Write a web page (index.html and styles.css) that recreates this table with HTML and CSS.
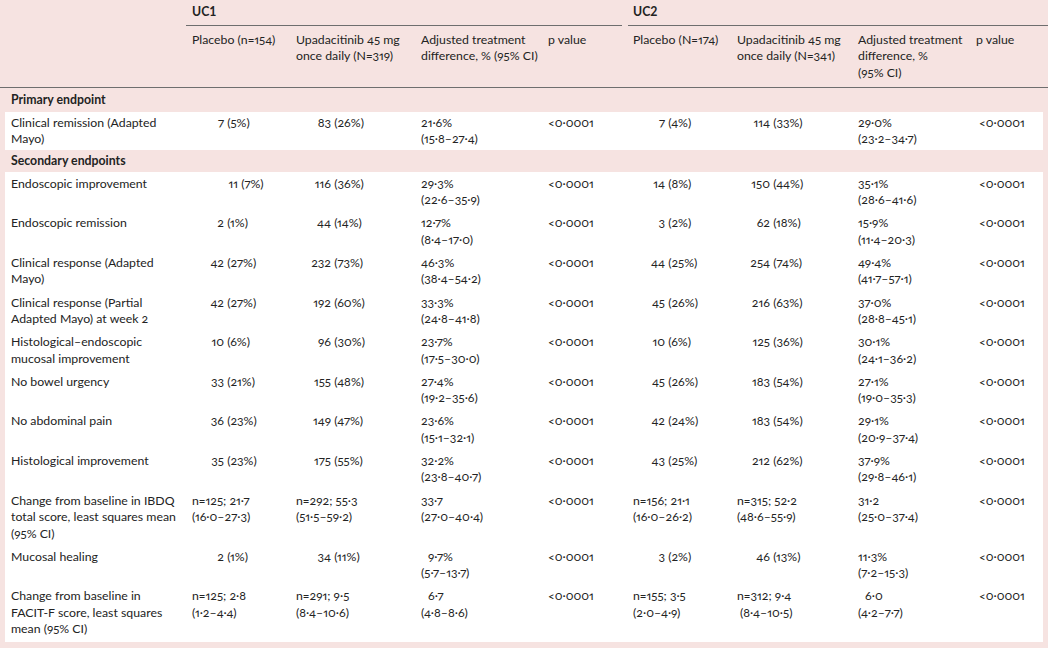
FILE: index.html
```html
<!DOCTYPE html>
<html lang="en">
<head>
<meta charset="utf-8">
<title>Endpoints table</title>
<link rel="stylesheet" href="styles.css">
</head>
<body>
<div class="page">
  <div class="head">
    <div class="grid full">
      <div class="cell"></div>
      <div class="cell grp uc1">UC1</div>
      <div class="cell grp uc2">UC2</div>
    </div>
    <div class="grid full sub">
      <div class="cell"></div>
      <div class="cell">Placebo (n=154)</div>
      <div class="cell">Upadacitinib 45 mg<br>once daily (N=319)</div>
      <div class="cell">Adjusted treatment<br>difference, % (95% CI)</div>
      <div class="cell">p value</div>
      <div class="cell">Placebo (N=174)</div>
      <div class="cell">Upadacitinib 45 mg<br>once daily (N=341)</div>
      <div class="cell">Adjusted treatment<br>difference, %<br>(95% CI)</div>
      <div class="cell ph">p value</div>
    </div>
  </div>

  <div class="section">Primary endpoint</div>
  <div class="panel single">
    <div class="grid inset row">
      <div class="cell lab">Clinical remission (Adapted Mayo)</div>
      <div class="cell a"><span class="n">7</span> (5%)</div>
      <div class="cell b"><span class="n">83</span> (26%)</div>
      <div class="cell">21·6%<br>(15·8–27·4)</div>
      <div class="cell">&lt;0·0001</div>
      <div class="cell c"><span class="n">7</span> (4%)</div>
      <div class="cell d"><span class="n">114</span> (33%)</div>
      <div class="cell">29·0%<br>(23·2–34·7)</div>
      <div class="cell pv">&lt;0·0001</div>
    </div>
  </div>

  <div class="section sec2">Secondary endpoints</div>
  <div class="panel main">
    <div class="grid inset row">
      <div class="cell lab">Endoscopic improvement</div>
      <div class="cell a wide"><span class="n">11</span> (7%)</div>
      <div class="cell b"><span class="n">116</span> (36%)</div>
      <div class="cell">29·3%<br>(22·6–35·9)</div>
      <div class="cell">&lt;0·0001</div>
      <div class="cell c"><span class="n">14</span> (8%)</div>
      <div class="cell d"><span class="n">150</span> (44%)</div>
      <div class="cell">35·1%<br>(28·6–41·6)</div>
      <div class="cell pv">&lt;0·0001</div>
    </div>
    <div class="grid inset row">
      <div class="cell lab">Endoscopic remission</div>
      <div class="cell a"><span class="n">2</span> (1%)</div>
      <div class="cell b"><span class="n">44</span> (14%)</div>
      <div class="cell">12·7%<br>(8·4–17·0)</div>
      <div class="cell">&lt;0·0001</div>
      <div class="cell c"><span class="n">3</span> (2%)</div>
      <div class="cell d"><span class="n">62</span> (18%)</div>
      <div class="cell">15·9%<br>(11·4–20·3)</div>
      <div class="cell pv">&lt;0·0001</div>
    </div>
    <div class="grid inset row">
      <div class="cell lab">Clinical response (Adapted Mayo)</div>
      <div class="cell a"><span class="n">42</span> (27%)</div>
      <div class="cell b"><span class="n">232</span> (73%)</div>
      <div class="cell">46·3%<br>(38·4–54·2)</div>
      <div class="cell">&lt;0·0001</div>
      <div class="cell c"><span class="n">44</span> (25%)</div>
      <div class="cell d"><span class="n">254</span> (74%)</div>
      <div class="cell">49·4%<br>(41·7–57·1)</div>
      <div class="cell pv">&lt;0·0001</div>
    </div>
    <div class="grid inset row">
      <div class="cell lab">Clinical response (Partial Adapted Mayo) at week 2</div>
      <div class="cell a"><span class="n">42</span> (27%)</div>
      <div class="cell b"><span class="n">192</span> (60%)</div>
      <div class="cell">33·3%<br>(24·8–41·8)</div>
      <div class="cell">&lt;0·0001</div>
      <div class="cell c"><span class="n">45</span> (26%)</div>
      <div class="cell d"><span class="n">216</span> (63%)</div>
      <div class="cell">37·0%<br>(28·8–45·1)</div>
      <div class="cell pv">&lt;0·0001</div>
    </div>
    <div class="grid inset row">
      <div class="cell lab">Histological–endoscopic mucosal improvement</div>
      <div class="cell a"><span class="n">10</span> (6%)</div>
      <div class="cell b"><span class="n">96</span> (30%)</div>
      <div class="cell">23·7%<br>(17·5–30·0)</div>
      <div class="cell">&lt;0·0001</div>
      <div class="cell c"><span class="n">10</span> (6%)</div>
      <div class="cell d"><span class="n">125</span> (36%)</div>
      <div class="cell">30·1%<br>(24·1–36·2)</div>
      <div class="cell pv">&lt;0·0001</div>
    </div>
    <div class="grid inset row">
      <div class="cell lab">No bowel urgency</div>
      <div class="cell a"><span class="n">33</span> (21%)</div>
      <div class="cell b"><span class="n">155</span> (48%)</div>
      <div class="cell">27·4%<br>(19·2–35·6)</div>
      <div class="cell">&lt;0·0001</div>
      <div class="cell c"><span class="n">45</span> (26%)</div>
      <div class="cell d"><span class="n">183</span> (54%)</div>
      <div class="cell">27·1%<br>(19·0–35·3)</div>
      <div class="cell pv">&lt;0·0001</div>
    </div>
    <div class="grid inset row">
      <div class="cell lab">No abdominal pain</div>
      <div class="cell a"><span class="n">36</span> (23%)</div>
      <div class="cell b"><span class="n">149</span> (47%)</div>
      <div class="cell">23·6%<br>(15·1–32·1)</div>
      <div class="cell">&lt;0·0001</div>
      <div class="cell c"><span class="n">42</span> (24%)</div>
      <div class="cell d"><span class="n">183</span> (54%)</div>
      <div class="cell">29·1%<br>(20·9–37·4)</div>
      <div class="cell pv">&lt;0·0001</div>
    </div>
    <div class="grid inset row">
      <div class="cell lab">Histological improvement</div>
      <div class="cell a"><span class="n">35</span> (23%)</div>
      <div class="cell b"><span class="n">175</span> (55%)</div>
      <div class="cell">32·2%<br>(23·8–40·7)</div>
      <div class="cell">&lt;0·0001</div>
      <div class="cell c"><span class="n">43</span> (25%)</div>
      <div class="cell d"><span class="n">212</span> (62%)</div>
      <div class="cell">37·9%<br>(29·8–46·1)</div>
      <div class="cell pv">&lt;0·0001</div>
    </div>
    <div class="grid inset row">
      <div class="cell lab">Change from baseline in IBDQ total score, least squares mean (95% CI)</div>
      <div class="cell">n=125; 21·7<br>(16·0–27·3)</div>
      <div class="cell">n=292; 55·3<br>(51·5–59·2)</div>
      <div class="cell">33·7<br>(27·0–40·4)</div>
      <div class="cell">&lt;0·0001</div>
      <div class="cell">n=156; 21·1<br>(16·0–26·2)</div>
      <div class="cell">n=315; 52·2<br>(48·6–55·9)</div>
      <div class="cell">31·2<br>(25·0–37·4)</div>
      <div class="cell pv">&lt;0·0001</div>
    </div>
    <div class="grid inset row">
      <div class="cell lab">Mucosal healing</div>
      <div class="cell a"><span class="n">2</span> (1%)</div>
      <div class="cell b"><span class="n">34</span> (11%)</div>
      <div class="cell"><span class="ind">9·7%</span><br>(5·7–13·7)</div>
      <div class="cell">&lt;0·0001</div>
      <div class="cell c"><span class="n">3</span> (2%)</div>
      <div class="cell d"><span class="n">46</span> (13%)</div>
      <div class="cell">11·3%<br>(7·2–15·3)</div>
      <div class="cell pv">&lt;0·0001</div>
    </div>
    <div class="grid inset row">
      <div class="cell lab">Change from baseline in<br>FACIT-F score, least squares<br>mean (95% CI)</div>
      <div class="cell">n=125; 2·8<br>(1·2–4·4)</div>
      <div class="cell">n=291; 9·5<br>(8·4–10·6)</div>
      <div class="cell"><span class="ind">6·7</span><br>(4·8–8·6)</div>
      <div class="cell">&lt;0·0001</div>
      <div class="cell">n=155; 3·5<br>(2·0–4·9)</div>
      <div class="cell">n=312; 9·4<br><span class="ind2">(8·4–10·5)</span></div>
      <div class="cell"><span class="ind">6·0</span><br>(4·2–7·7)</div>
      <div class="cell pv">&lt;0·0001</div>
    </div>
  </div>
</div>
</body>
</html>
```

FILE: styles.css
```css
* { box-sizing: border-box; }

html, body {
  margin: 0;
  padding: 0;
  background: #f6e3e1;
}

body {
  font-family: Lato, "Liberation Sans", sans-serif;
  font-size: 12.3px;
  line-height: 16.5px;
  color: #232323;
  font-variant-numeric: oldstyle-nums proportional-nums;
}

.page {
  width: 1048px;
  height: 648px;
  overflow: hidden;
}

.grid {
  display: grid;
}

.grid.full {
  grid-template-columns: 186px 104px 125px 127px 85px 104px 121px 114px 82px;
}

.grid.inset {
  grid-template-columns: 181px 104px 125px 127px 85px 104px 121px 114px 77px;
}

.cell {
  padding-left: 6px;
}

.head {
  border-bottom: 1px solid #6e6e6e;
}

.grp {
  font-weight: 700;
  font-variant-numeric: lining-nums;
  padding-top: 4px;
  padding-bottom: 4px;
  border-bottom: 1px solid #6e6e6e;
}

.uc1 {
  grid-column: 2 / 6;
  margin-right: 5px;
}

.uc2 {
  grid-column: 6 / 10;
  margin-left: 1px;
  padding-left: 5px;
}

.sub {
  padding-top: 6px;
  padding-bottom: 6px;
}

.ph {
  padding-left: 10px;
}

.section {
  font-weight: 700;
  padding: 4px 0 3.5px 11px;
}

.sec2 {
  padding-top: 3px;
  padding-bottom: 2.5px;
}

.panel {
  background: #ffffff;
  margin: 0 5px;
}

.single .row {
  padding-top: 2.5px;
  padding-bottom: 2.5px;
}

.main {
  padding-top: 0.5px;
  padding-bottom: 0.5px;
}

.main .row {
  padding-top: 3.3px;
  padding-bottom: 3.3px;
}

.lab {
  padding-left: 6px;
  padding-right: 4px;
}

.n {
  display: inline-block;
  text-align: right;
}

.a .n { width: 32px; }
.a.wide .n { width: 46px; }
.b .n { width: 35px; }
.c .n { width: 32px; }
.d .n { width: 33px; }

.pv {
  padding-left: 13px;
}

.ind {
  padding-left: 7px;
}

.ind2 {
  padding-left: 3px;
}
```
